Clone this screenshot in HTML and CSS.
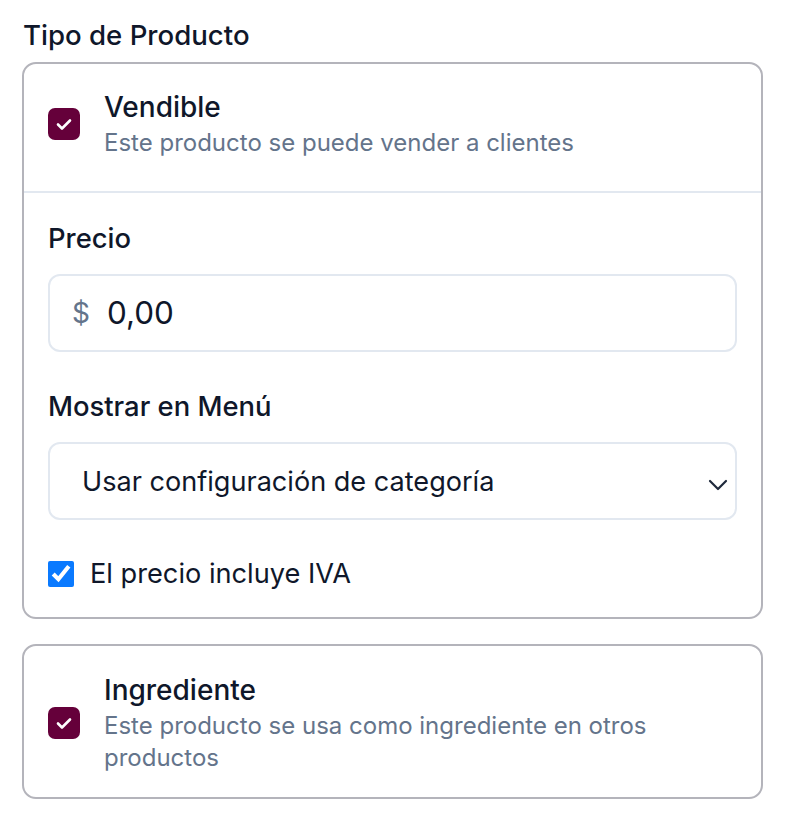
FILE: index.html
```html
<!DOCTYPE html>
<html lang="es">
<head>
    <meta charset="UTF-8">
    <meta name="viewport" content="width=device-width, initial-scale=1.0">
    <title>Tipo de Producto</title>
    <link rel="stylesheet" href="styles.css">
</head>
<body>
    <div class="section">
        <h3 class="section-title">Tipo de Producto</h3>

        <!-- Vendible -->
        <div class="card">
            <label class="card-head">
                <input type="checkbox" class="big-check" checked>
                <span class="head-text">
                    <span class="head-title">Vendible</span>
                    <span class="head-desc">Este producto se puede vender a clientes</span>
                </span>
            </label>
            <div class="card-body">
                <div class="field">
                    <label class="field-label" for="price">Precio</label>
                    <div class="input-box">
                        <span class="currency">$</span>
                        <input type="text" id="price" class="price-input" value="0,00">
                    </div>
                </div>
                <div class="field">
                    <label class="field-label" for="menu">Mostrar en Menú</label>
                    <div class="select-box">
                        <select id="menu" class="menu-select">
                            <option>Usar configuración de categoría</option>
                            <option>Mostrar</option>
                            <option>Ocultar</option>
                        </select>
                        <svg class="chevron" width="20" height="12" viewBox="0 0 20 12">
                            <path d="M2 2 L10 10 L18 2" fill="none" stroke="#1e293b" stroke-width="2.2" stroke-linecap="round" stroke-linejoin="round"/>
                        </svg>
                    </div>
                </div>
                <label class="tax-row">
                    <input type="checkbox" class="tax-check" checked>
                    <span>El precio incluye IVA</span>
                </label>
            </div>
        </div>

        <!-- Ingrediente -->
        <div class="card card-second">
            <label class="card-head card-head-single">
                <input type="checkbox" class="big-check" checked>
                <span class="head-text">
                    <span class="head-title">Ingrediente</span>
                    <span class="head-desc">Este producto se usa como ingrediente en otros productos</span>
                </span>
            </label>
        </div>
    </div>
</body>
</html>
```

FILE: styles.css
```css
body {
    font-family: Inter, "Noto Sans", Arial, sans-serif;
    background-color: #ffffff;
    color: #0f172a;
    margin: 0;
    padding: 0;
}
.section {
    width: 741px;
    padding: 18px 0 0 22px;
}
.section-title {
    margin: 0 0 10px 1px;
    font-size: 27.6px;
    line-height: 34px;
    font-weight: 500;
}
.card {
    border: 2px solid #b4b4bb;
    border-radius: 14px;
    background-color: #ffffff;
}
.card-second {
    margin-top: 25px;
}
.card-head {
    display: flex;
    align-items: center;
    gap: 24px;
    padding: 25px 24px 32px 24px;
    border-bottom: 2px solid #e2e8f0;
    cursor: pointer;
}
.card-head-single {
    border-bottom: none;
    padding-top: 26px;
    padding-bottom: 23px;
}
.big-check {
    appearance: none;
    -webkit-appearance: none;
    flex: none;
    width: 32px;
    height: 32px;
    margin: 0;
    border-radius: 7px;
    background-color: #65003a;
    background-image: url("data:image/svg+xml;utf8,<svg xmlns='http://www.w3.org/2000/svg' viewBox='0 0 32 32'><path d='M10 16.5 L14 20.5 L22 12.5' fill='none' stroke='white' stroke-width='2.6' stroke-linecap='round' stroke-linejoin='round'/></svg>");
    background-size: 32px 32px;
    cursor: pointer;
}
.head-text {
    display: flex;
    flex-direction: column;
}
.head-title {
    font-size: 28px;
    line-height: 36px;
    font-weight: 500;
}
.head-desc {
    margin-top: 2px;
    font-size: 24px;
    line-height: 32px;
    color: #64748b;
}
.card-body {
    padding: 29px 24px 27px 24px;
}
.field {
    margin-bottom: 38px;
}
.field-label {
    display: block;
    font-size: 27.4px;
    line-height: 32px;
    font-weight: 500;
    margin-bottom: 20px;
}
.input-box, .select-box {
    position: relative;
    display: flex;
    align-items: center;
    height: 78px;
    box-sizing: border-box;
    border: 2px solid #e2e8f0;
    border-radius: 12px;
}
.currency {
    padding-left: 22px;
    font-size: 28px;
    color: #64748b;
}
.price-input {
    flex: 1;
    border: none;
    outline: none;
    background: transparent;
    margin-left: 17px;
    padding: 0;
    font-family: inherit;
    font-size: 31.4px;
    color: #0f172a;
}
.menu-select {
    appearance: none;
    -webkit-appearance: none;
    width: 100%;
    height: 100%;
    border: none;
    outline: none;
    background: transparent;
    padding: 0 60px 0 32px;
    font-family: inherit;
    font-size: 27.1px;
    color: #0f172a;
}
.chevron {
    position: absolute;
    right: 7px;
    top: 35px;
    pointer-events: none;
}
.tax-row {
    display: flex;
    align-items: center;
    gap: 16px;
    font-size: 27.2px;
    line-height: 32px;
    margin-top: 0;
    cursor: pointer;
}
.tax-check {
    width: 26px;
    height: 26px;
    margin: 0;
    accent-color: #0a7aff;
}
```
